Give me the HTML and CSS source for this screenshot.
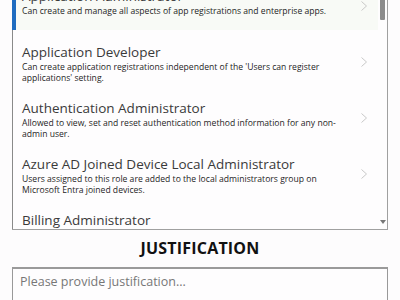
FILE: index.html
```html
<!DOCTYPE html>
<html>
<head>
<meta charset="utf-8">
<link rel="stylesheet" href="styles.css">
</head>
<body>
<div class="page">
  <div class="listbox">
    <ul class="roles">
      <li class="role selected">
        <div class="text">
          <div class="title">Application Administrator</div>
          <div class="desc">Can create and manage all aspects of app registrations and enterprise apps.</div>
        </div>
        <svg class="chev" width="6" height="10" viewBox="0 0 6 10"><polyline points="0.5,0.5 5.5,5 0.5,9.5" fill="none" stroke="#c8c8c8" stroke-width="1"/></svg>
      </li>
      <li class="role">
        <div class="text">
          <div class="title">Application Developer</div>
          <div class="desc">Can create application registrations independent of the 'Users can register applications' setting.</div>
        </div>
        <svg class="chev" width="6" height="10" viewBox="0 0 6 10"><polyline points="0.5,0.5 5.5,5 0.5,9.5" fill="none" stroke="#c8c8c8" stroke-width="1"/></svg>
      </li>
      <li class="role">
        <div class="text">
          <div class="title">Authentication Administrator</div>
          <div class="desc">Allowed to view, set and reset authentication method information for any non-<br>admin user.</div>
        </div>
        <svg class="chev" width="6" height="10" viewBox="0 0 6 10"><polyline points="0.5,0.5 5.5,5 0.5,9.5" fill="none" stroke="#c8c8c8" stroke-width="1"/></svg>
      </li>
      <li class="role">
        <div class="text">
          <div class="title">Azure AD Joined Device Local Administrator</div>
          <div class="desc">Users assigned to this role are added to the local administrators group on Microsoft Entra joined devices.</div>
        </div>
        <svg class="chev" width="6" height="10" viewBox="0 0 6 10"><polyline points="0.5,0.5 5.5,5 0.5,9.5" fill="none" stroke="#c8c8c8" stroke-width="1"/></svg>
      </li>
      <li class="role">
        <div class="text">
          <div class="title">Billing Administrator</div>
        </div>
      </li>
    </ul>
    <div class="scrollbar">
      <div class="thumb"></div>
      <div class="arrow"></div>
    </div>
  </div>
  <h2 class="heading">JUSTIFICATION</h2>
  <textarea class="just" placeholder="Please provide justification..."></textarea>
</div>
</body>
</html>
```
FILE: styles.css
```css
html, body {
  margin: 0;
  padding: 0;
  background: #fdfcfd;
  overflow: hidden;
}
.page {
  padding: 0 12px;
  font-family: "Open Sans", "Noto Sans", sans-serif;
}
.listbox {
  margin-top: -27px;
  height: 257px;
  box-sizing: border-box;
  border: 1px solid #a0a0a0;
  border-left: none;
  display: flex;
  overflow: hidden;
  background: #fefdfe;
}
.roles {
  list-style: none;
  margin: 0;
  padding: 0;
  flex: 1;
  min-width: 0;
}
.role {
  height: 56px;
  box-sizing: border-box;
  padding: 13px 11px 0 9px;
  border-left: 1px solid #8a8a8a;
  display: flex;
  align-items: flex-start;
  gap: 16px;
}
.role.selected {
  border-left: 4px solid #1f6cc0;
  padding-left: 6px;
  background: #f8faf6;
}
.text {
  flex: 1;
  min-width: 0;
}
.title {
  font-size: 13.5px;
  line-height: 18px;
  color: #3a3a3a;
  white-space: nowrap;
}
.desc {
  margin-top: 1px;
  font-size: 8.6px;
  line-height: 11px;
  color: #1e1e1e;
}
.chev {
  flex: none;
  margin-top: 14px;
}
.scrollbar {
  width: 9px;
  flex: none;
  display: flex;
  flex-direction: column;
  align-items: center;
  justify-content: space-between;
  padding: 0 0 5px;
}
.thumb {
  width: 5px;
  height: 46px;
  background: #8c8c8c;
  border-radius: 1px;
}
.arrow {
  width: 0;
  height: 0;
  border-left: 3px solid transparent;
  border-right: 3px solid transparent;
  border-top: 4px solid #777;
}
.heading {
  margin: 0;
  padding: 7px 0 8px;
  text-align: center;
  font-size: 16px;
  line-height: 22px;
  font-weight: 700;
  color: #111;
  letter-spacing: 0.2px;
}
.just {
  display: block;
  width: 100%;
  box-sizing: border-box;
  height: 80px;
  margin: 0;
  border: 1px solid #999;
  border-top: 2px solid #9a9a9a;
  padding: 4px 7px;
  font-family: "Open Sans", "Noto Sans", sans-serif;
  font-size: 12.5px;
  line-height: 18px;
  resize: none;
  background: #fefdfe;
}
.just::placeholder {
  color: #777;
}
```
